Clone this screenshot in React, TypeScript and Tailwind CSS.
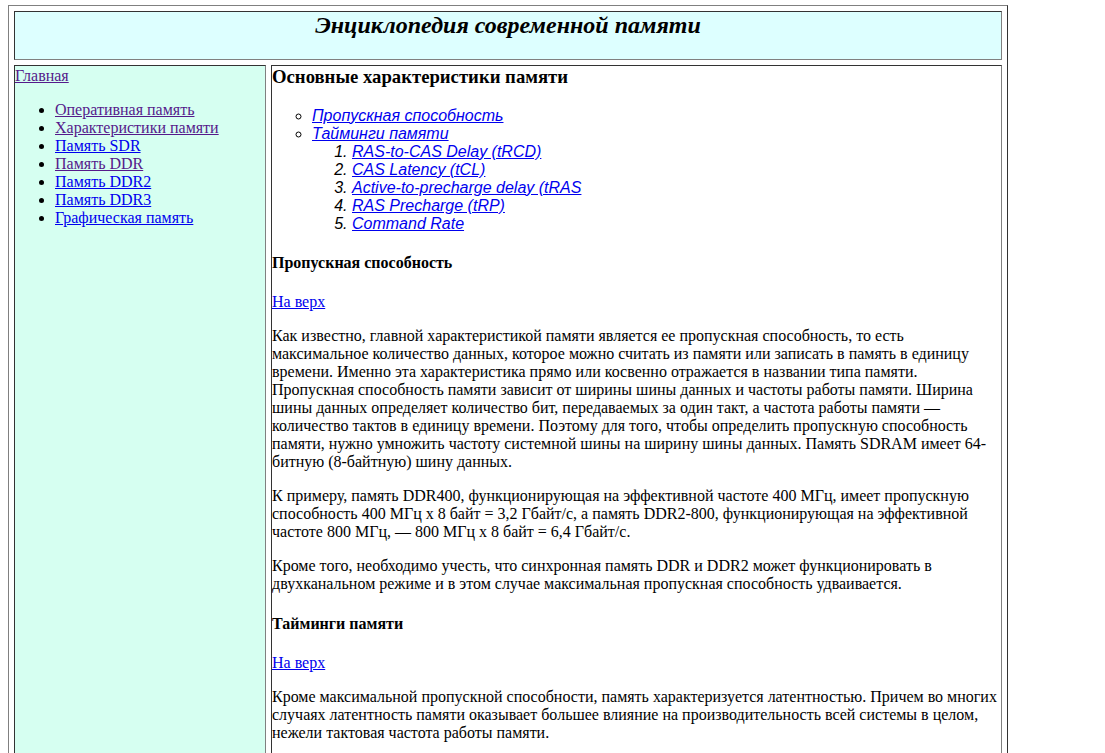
const sideLinks = [
  { label: 'Оперативная память', visited: true },
  { label: 'Характеристики памяти', visited: true },
  { label: 'Память SDR', visited: false },
  { label: 'Память DDR', visited: true },
  { label: 'Память DDR2', visited: false },
  { label: 'Память DDR3', visited: false },
  { label: 'Графическая память', visited: false },
]

const timings = [
  'RAS-to-CAS Delay (tRCD)',
  'CAS Latency (tCL)',
  'Active-to-precharge delay (tRAS',
  'RAS Precharge (tRP)',
  'Command Rate',
]

const cell =
  'border border-t-[#333] border-l-[#333] border-r-[#808080] border-b-[#808080]'

export default function App() {
  return (
    <div className="min-h-screen bg-white text-black font-['Liberation_Serif','Times_New_Roman',serif] text-[16px] leading-[18px] pt-[5px] pb-4">
      <div className="ml-2 w-[1000px] border border-t-[#808080] border-l-[#808080] border-r-[#333] border-b-[#333] p-[5px] flex flex-col gap-[5px]">
        {/* Header */}
        <div className={`${cell} h-[49px] bg-[#ddffff] text-center`}>
          <h1 className="text-[24px] leading-[27px] font-bold italic">
            Энциклопедия современной памяти
          </h1>
        </div>

        <div className="flex gap-[5px] items-stretch">
          {/* Sidebar */}
          <div className={`${cell} w-[252px] shrink-0 bg-[#d6fff1] pt-px`}>
            <a href="#" className="text-[#551a8b] underline">
              Главная
            </a>
            <ul className="list-disc pl-10 my-4">
              {sideLinks.map((l) => (
                <li key={l.label}>
                  <a
                    href="#"
                    className={`underline ${l.visited ? 'text-[#551a8b]' : 'text-[#0000ee]'}`}
                  >
                    {l.label}
                  </a>
                </li>
              ))}
            </ul>
          </div>

          {/* Content */}
          <div className={`${cell} flex-1 min-w-0`}>
            <h3 className="text-[18.72px] leading-[21px] font-bold mb-[19.72px]">
              Основные характеристики памяти
            </h3>
            <ul className="list-[circle] pl-10 my-4 italic font-['Liberation_Sans',Arial,sans-serif]">
              <li>
                <a href="#" className="text-[#0000ee] underline">
                  Пропускная способность
                </a>
              </li>
              <li>
                <a href="#" className="text-[#0000ee] underline">
                  Тайминги памяти
                </a>
                <ol className="list-decimal pl-10">
                  {timings.map((t) => (
                    <li key={t}>
                      <a href="#" className="text-[#0000ee] underline">
                        {t}
                      </a>
                    </li>
                  ))}
                </ol>
              </li>
            </ul>

            <h4 className="font-bold my-[21.28px]">Пропускная способность</h4>
            <p className="my-4">
              <a href="#" className="text-[#0000ee] underline">
                На верх
              </a>
            </p>
            <p className="my-4">
              Как известно, главной характеристикой памяти является ее пропускная способность, то есть
              максимальное количество данных, которое можно считать из памяти или записать в память в
              единицу времени. Именно эта характеристика прямо или косвенно отражается в названии типа
              памяти. Пропускная способность памяти зависит от ширины шины данных и частоты работы
              памяти. Ширина шины данных определяет количество бит, передаваемых за один такт, а
              частота работы памяти — количество тактов в единицу времени. Поэтому для того, чтобы
              определить пропускную способность памяти, нужно умножить частоту системной шины на ширину
              шины данных. Память SDRAM имеет 64-битную (8-байтную) шину данных.
            </p>
            <p className="my-4">
              К примеру, память DDR400, функционирующая на эффективной частоте 400 МГц, имеет пропускную
              способность 400 МГц x 8 байт = 3,2 Гбайт/с, а память DDR2-800, функционирующая на
              эффективной частоте 800 МГц, — 800 МГц x 8 байт = 6,4 Гбайт/с.
            </p>
            <p className="my-4">
              Кроме того, необходимо учесть, что синхронная память DDR и DDR2 может функционировать в
              двухканальном режиме и в этом случае максимальная пропускная способность удваивается.
            </p>

            <h4 className="font-bold my-[21.28px]">Тайминги памяти</h4>
            <p className="my-4">
              <a href="#" className="text-[#0000ee] underline">
                На верх
              </a>
            </p>
            <p className="my-4">
              Кроме максимальной пропускной способности, память характеризуется латентностью. Причем во
              многих случаях латентность памяти оказывает большее влияние на производительность всей
              системы в целом, нежели тактовая частота работы памяти.
            </p>
            <p className="my-4">
              Латентность памяти определяется таймингами — задержками между отдельными командами
              управления памятью. Тайминги указываются в тактах и обычно записываются в виде
              последовательности чисел, например 5-5-5-15.
            </p>
          </div>
        </div>
      </div>
    </div>
  )
}
